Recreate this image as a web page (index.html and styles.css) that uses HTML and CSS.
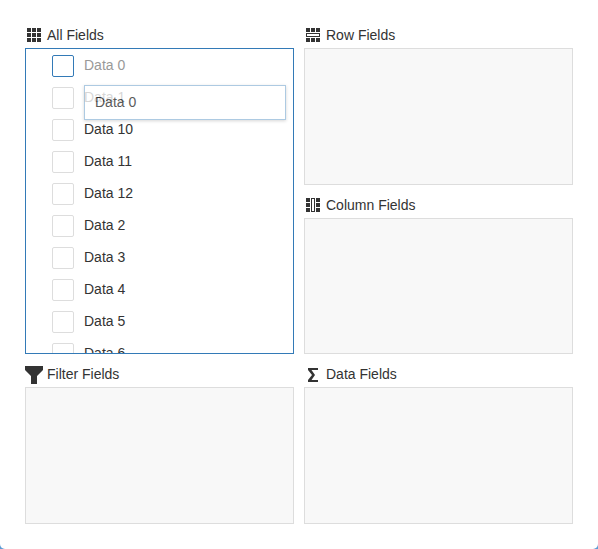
FILE: index.html
```html
<!DOCTYPE html>
<html lang="en">
<head>
<meta charset="utf-8">
<title>Field Chooser</title>
<link rel="stylesheet" href="styles.css">
</head>
<body>
<main class="chooser">
  <section class="area area-all">
    <h2 class="area-title">
      <svg class="icon" viewBox="0 0 18 18" aria-hidden="true"><path d="M2 2h4v4H2zM7 2h4v4H7zM12 2h4v4h-4zM2 7h4v4H2zM7 7h4v4H7zM12 7h4v4h-4zM2 12h4v4H2zM7 12h4v4H7zM12 12h4v4h-4z"/></svg>
      All Fields
    </h2>
    <div class="box box-active">
      <ul class="fields">
        <li><label class="field field-source"><input type="checkbox" class="check check-focus">Data 0</label></li>
        <li class="drag-anchor"><label class="field"><input type="checkbox" class="check">Data 1</label><div class="drag-item">Data 0</div></li>
        <li><label class="field"><input type="checkbox" class="check">Data 10</label></li>
        <li><label class="field"><input type="checkbox" class="check">Data 11</label></li>
        <li><label class="field"><input type="checkbox" class="check">Data 12</label></li>
        <li><label class="field"><input type="checkbox" class="check">Data 2</label></li>
        <li><label class="field"><input type="checkbox" class="check">Data 3</label></li>
        <li><label class="field"><input type="checkbox" class="check">Data 4</label></li>
        <li><label class="field"><input type="checkbox" class="check">Data 5</label></li>
        <li><label class="field"><input type="checkbox" class="check">Data 6</label></li>
      </ul>
    </div>
  </section>
  <section class="area">
    <h2 class="area-title">
      <svg class="icon" viewBox="0 0 18 18" aria-hidden="true"><path fill-rule="evenodd" d="M2 2h4v4H2zM7 2h4v4H7zM12 2h4v4h-4zM2 7h14v4H2zM3 8v2h12V8zM2 12h4v4H2zM7 12h4v4H7zM12 12h4v4h-4z"/></svg>
      Row Fields
    </h2>
    <div class="box"></div>
  </section>
  <section class="area">
    <h2 class="area-title">
      <svg class="icon" viewBox="0 0 18 18" aria-hidden="true"><path fill-rule="evenodd" d="M2 2h4v4H2zM2 7h4v4H2zM2 12h4v4H2zM7 2h4v14H7zM8 3v12h2V3zM12 2h4v4h-4zM12 7h4v4h-4zM12 12h4v4h-4z"/></svg>
      Column Fields
    </h2>
    <div class="box"></div>
  </section>
  <section class="area">
    <h2 class="area-title">
      <svg class="icon" viewBox="0 0 18 18" aria-hidden="true"><path d="M0 1h18v4l-6 6v8H6v-8L0 5z"/></svg>
      Filter Fields
    </h2>
    <div class="box"></div>
  </section>
  <section class="area">
    <h2 class="area-title">
      <svg class="icon" viewBox="0 0 18 18" aria-hidden="true"><path d="M4 3h10v2H7.500l3.500 5-3.500 5H14v2H4v-2l4-5-4-5z"/></svg>
      Data Fields
    </h2>
    <div class="box"></div>
  </section>
</main>
</body>
</html>
```
FILE: styles.css
```css
* {
  box-sizing: border-box;
}

body {
  margin: 0;
  background: #5b9bd5;
  color: #333;
  font: 14px/18px "Liberation Sans", Arial, sans-serif;
}

.chooser {
  display: grid;
  grid-template-columns: 1fr 1fr;
  grid-template-rows: repeat(3, minmax(0, 1fr));
  gap: 11px 10px;
  height: 100vh;
  min-height: 400px;
  padding: 26px 25px 25px;
  background: #fff;
  border-radius: 0 0 5px 5px;
}

.area {
  display: flex;
  flex-direction: column;
  min-height: 0;
}

.area-all {
  grid-row: span 2;
}

.area-title {
  display: flex;
  align-items: flex-start;
  gap: 4px;
  height: 22px;
  margin: 0;
  font-size: 14px;
  font-weight: normal;
}

.icon {
  width: 18px;
  height: 18px;
  fill: #333;
  overflow: visible;
}

.box {
  flex: 1;
  min-height: 0;
  background: #f8f8f8;
  border: 1px solid #ddd;
  overflow: hidden;
}

.box-active {
  background: #fff;
  border-color: #337ab7;
}

.fields {
  margin: 0;
  padding: 1px 7px 0 26px;
  list-style: none;
}

.field {
  display: flex;
  align-items: flex-start;
  gap: 10px;
  height: 32px;
  padding-top: 5px;
  line-height: 20px;
}

.field-source {
  color: #999;
}

.check {
  appearance: none;
  flex: none;
  width: 22px;
  height: 22px;
  margin: 0;
  background: #fff;
  border: 1px solid #ddd;
  border-radius: 2px;
}

.check-focus {
  border-color: #337ab7;
}

.drag-anchor {
  position: relative;
}

/* Dragged copy of a field, floating over the list */
.drag-item {
  position: absolute;
  top: 3px;
  left: 32px;
  right: 0;
  height: 35px;
  padding: 0 10px;
  line-height: 33px;
  background: #fff;
  border: 1px solid #99bddb;
  box-shadow: 0 1px 3px rgba(0, 0, 0, 0.2);
  opacity: 0.8;
}
```
